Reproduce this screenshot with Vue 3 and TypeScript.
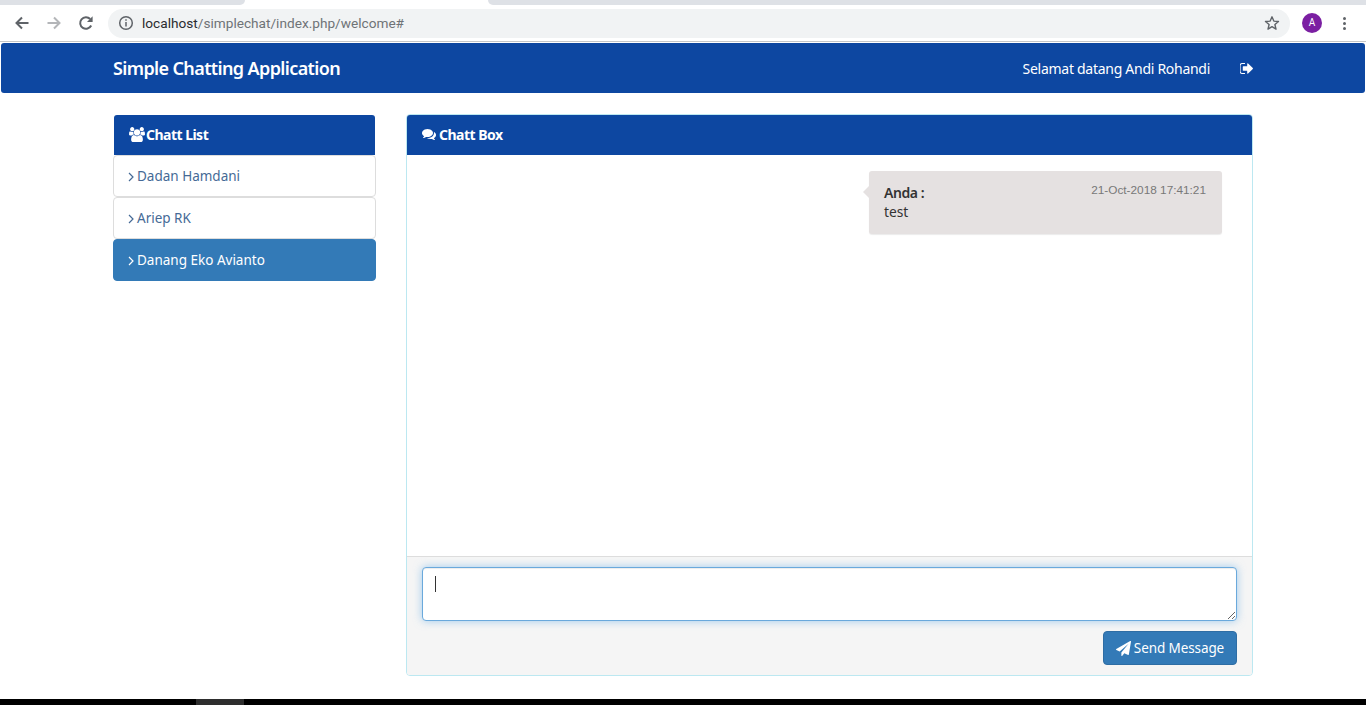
<script setup lang="ts">
const contacts = [
  { name: 'Dadan Hamdani', active: false },
  { name: 'Ariep RK', active: false },
  { name: 'Danang Eko Avianto', active: true },
]
const plane = 'M1764 11q33 24 27 64l-256 1536q-5 29-32 45-14 8-31 8-11 0-24-5l-453-185-242 295q-18 23-49 23-13 0-22-4-19-7-30.5-23.5t-11.5-36.5v-349l864-1059-1069 925-395-162q-37-14-40-55-2-40 32-59l1664-960q15-9 32-9 20 0 36 11z'
const comments = 'M1408 768q0 139-94 257t-256.500 186.500-353.500 68.500q-86 0-176-16-124 88-278 128-36 9-86 16h-3q-11 0-20.500-8t-11.500-21q-1-3-1-6.500t.5-6.500 2-6l2.500-5 3.500-5.500 4-5 4.500-5 4-4.500q5-6 23-25t26-29.500 22.500-29 25-38.500 20.500-44q-124-72-195-177t-71-224q0-139 94-257t256.500-186.500 353.500-68.500 353.500 68.500 256.500 186.500 94 257zm384 256q0 120-71 224.500t-195 176.500q10 24 20.500 44t25 38.500 22.500 29 26 29.500 23 25q1 1 4 4.500t4.500 5 4 5 3.500 5.500l2.500 5 2 6 .5 6.500-1 6.500q-3 14-13 22t-22 7q-50-7-86-16-154-40-278-128-90 16-176 16-271 0-472-132 58 4 88 4 161 0 309-45t264-129q125-92 192-212t67-254q0-77-23-152 129 71 204 178t75 230z'
const users = 'M593 896q-162 5-265 128h-134q-82 0-138-40.500t-56-118.500q0-353 124-353 6 0 43.500 21t97.500 42.500 119 21.500q67 0 133-23-5 37-5 66 0 139 81 256zm1071 637q0 120-73 189.500t-194 69.500h-874q-121 0-194-69.500t-73-189.500q0-53 3.500-103.500t14-109 26.500-108.500 43-97.500 62-81 85.500-53.500 111.500-20q10 0 43 21.500t73 48 107 48 135 21.500 135-21.500 107-48 73-48 43-21.500q61 0 111.500 20t85.500 53.500 62 81 43 97.500 26.500 108.500 14 109 3.500 103.500zm-1024-1277q0 106-75 181t-181 75-181-75-75-181 75-181 181-75 181 75 75 181zm704 384q0 159-112.500 271.500t-271.500 112.500-271.500-112.500-112.500-271.500 112.500-271.500 271.500-112.500 271.500 112.500 112.500 271.500zm576 225q0 78-56 118.500t-138 40.500h-134q-103-123-265-128 81-117 81-256 0-29-5-66 66 23 133 23 59 0 119-21.500t97.500-42.500 43.500-21q124 0 124 353zm-128-609q0 106-75 181t-181 75-181-75-75-181 75-181 181-75 181 75 75 181z'
const signOut = 'M704 1440q0 4 1 20t.5 26.500-3 23.500-10 19.500-20.500 6.500h-320q-119 0-203.500-84.500t-84.500-203.500v-704q0-119 84.500-203.500t203.500-84.500h320q13 0 22.500 9.500t9.500 22.500q0 4 1 20t.5 26.500-3 23.500-10 19.500-20.500 6.500h-320q-66 0-113 47t-47 113v704q0 66 47 113t113 47h312l11.500 1 11.500 3 8 5.500 7 9 2 13.500zm928-544q0 26-19 45l-544 544q-19 19-45 19t-45-19-19-45v-288h-448q-26 0-45-19t-19-45v-384q0-26 19-45t45-19h448v-288q0-26 19-45t45-19 45 19l544 544q19 19 19 45z'
</script>

<template>
  <div class="page">
    <div class="tabstrip">
      <div class="tab-gray tab-left"></div>
      <div class="tab-active"></div>
      <div class="tab-gray tab-right"></div>
    </div>
    <div class="toolbar">
      <div class="navbtns">
        <svg class="tbicon" viewBox="0 0 16 16"><path d="M14.5 8H2.5M8 2.5L2.5 8 8 13.5" fill="none" stroke="#5f6368" stroke-width="2"/></svg>
        <svg class="tbicon" viewBox="0 0 16 16"><path d="M1.500 8H13.500M8 2.500L13.500 8 8 13.500" fill="none" stroke="#b4b6b9" stroke-width="2"/></svg>
        <svg class="tbicon" viewBox="0 0 16 16"><path d="M13.200 10.500A5.800 5.800 0 1 1 12.200 4" fill="none" stroke="#5f6368" stroke-width="2"/><path d="M14.600 1.300V7H9z" fill="#5f6368"/></svg>
      </div>
      <div class="omnibox">
        <svg class="info" viewBox="0 0 16 16"><circle cx="8" cy="8" r="6.300" fill="none" stroke="#5f6368" stroke-width="1.500"/><path d="M8 7v4.500M8 4.300v1.500" stroke="#5f6368" stroke-width="1.500"/></svg>
        <span class="url"><span class="host">localhost</span>/simplechat/index.php/welcome#</span>
        <svg class="star" viewBox="0 0 16 16"><path d="M8 1.800l1.800 4.300 4.700.4-3.600 3 1.100 4.600L8 11.700l-4 2.400 1.100-4.600-3.600-3 4.700-.4z" fill="none" stroke="#5f6368" stroke-width="1.400" stroke-linejoin="round"/></svg>
      </div>
      <div class="avatar">A</div>
      <div class="menu"><i></i><i></i><i></i></div>
    </div>
    <div class="sep"></div>

    <nav class="navbar">
      <div class="container navrow">
        <span class="brand">Simple Chatting Application</span>
        <div class="navright">
          <span class="welcome">Selamat datang Andi Rohandi</span>
          <svg class="signout" viewBox="128 256 1504 1280"><path :d="signOut" fill="#fff"/></svg>
        </div>
      </div>
    </nav>

    <main class="container content">
      <aside class="side">
        <div class="heading"><svg class="ic-users" viewBox="0 0 1920 1792"><path :d="users" fill="#fff"/></svg>Chatt List</div>
        <a v-for="c in contacts" :key="c.name" class="item" :class="{ active: c.active }">
          <svg class="chev" viewBox="0 0 6 10"><path d="M1 1l4 4-4 4" fill="none" stroke="currentColor" stroke-width="1.200"/></svg>{{ c.name }}
        </a>
      </aside>
      <section class="chat">
        <div class="heading"><svg class="ic-comments" viewBox="0 0 1792 1792"><path :d="comments" fill="#fff"/></svg>Chatt Box</div>
        <div class="messages">
          <div class="bubble">
            <div class="bubble-top"><strong>Anda :</strong><span class="time">21-Oct-2018 17:41:21</span></div>
            <div class="msg">test</div>
          </div>
        </div>
        <div class="footer">
          <div class="inputwrap">
            <textarea class="input"></textarea>
            <span class="caret"></span>
          </div>
          <div class="actions">
            <button class="send"><svg class="ic-plane" viewBox="0 0 1792 1792"><path :d="plane" fill="#fff"/></svg>Send Message</button>
          </div>
        </div>
      </section>
    </main>

    <div class="taskbar"><div class="taskitem"></div></div>
  </div>
</template>

<style>
html, body { margin: 0; background: #fff; overflow: hidden; }
</style>

<style scoped>
.page {
  height: 705px;
  display: flex;
  flex-direction: column;
  font-family: "Noto Sans", "Open Sans", sans-serif;
  color: #333;
  background: #fff;
  overflow: hidden;
}
.tabstrip { height: 5px; display: flex; background: #fff; flex: none; }
.tab-gray { background: #dee1e6; }
.tab-left { width: 245px; border-bottom-right-radius: 6px; }
.tab-active { width: 243px; background: #fff; }
.tab-right { flex: 1; border-bottom-left-radius: 6px; }
.toolbar {
  height: 36px;
  flex: none;
  display: flex;
  align-items: center;
  background: #fff;
  padding-left: 14px;
  box-sizing: border-box;
}
.navbtns { display: flex; gap: 16px; width: 94px; flex: none; }
.tbicon { width: 16px; height: 16px; }
.omnibox {
  width: 1182px;
  height: 29px;
  flex: none;
  display: flex;
  align-items: center;
  background: #f1f3f4;
  border-radius: 15px;
  padding: 0 10px 0 10px;
  box-sizing: border-box;
}
.info { width: 16px; height: 16px; flex: none; margin-right: 8px; }
.url { flex: 1; font: 13.65px Roboto, sans-serif; color: #6f7377; }
.host { color: #2b2c2f; }
.star { width: 16px; height: 16px; flex: none; }
.avatar {
  width: 20px;
  height: 20px;
  margin-left: 12px;
  border-radius: 50%;
  background: #7b1fa2;
  color: #fff;
  font: 10px/20px Roboto, sans-serif;
  text-align: center;
  flex: none;
}
.menu { display: flex; flex-direction: column; gap: 2px; margin-left: 21px; flex: none; }
.menu i { width: 3px; height: 3px; border-radius: 50%; background: #5f6368; }
.sep { height: 1px; background: #c4c6c8; flex: none; }
.navbar {
  flex: none;
  height: 50px;
  margin: 1px 1px 0;
  background: #0d47a1;
  border-radius: 3px;
  color: #fff;
}
.container { width: 1140px; margin: 0 auto; box-sizing: border-box; }
.navrow { height: 50px; display: flex; align-items: center; justify-content: space-between; }
.brand { font-size: 18px; font-weight: 600; letter-spacing: -0.62px; }
.navright { display: flex; align-items: center; }
.welcome { font-size: 14px; letter-spacing: -0.28px; }
.signout { width: 13px; height: 11px; margin-left: 30px; }
.content {
  flex: 1;
  min-height: 0;
  display: grid;
  grid-template-columns: 263px 847px;
  column-gap: 30px;
  padding-top: 21px;
  align-content: start;
}
.heading {
  height: 40px;
  display: flex;
  align-items: center;
  padding: 0 15px 2px;
  background: #0d47a1;
  color: #fff;
  font-size: 14px;
  font-weight: 700;
  letter-spacing: -0.52px;
  border-radius: 3px 3px 0 0;
  box-sizing: border-box;
}
.ic-users { width: 16px; height: 15px; margin-right: 1px; }
.ic-comments { width: 14px; height: 14px; margin-right: 3px; }
.item {
  display: flex;
  align-items: center;
  height: 42px;
  padding: 0 15px;
  box-sizing: border-box;
  border: 1px solid #ddd;
  border-radius: 4px;
  background: #fff;
  color: #456a96;
  font-size: 13.5px;
}
.side { padding-top: 1px; }
.side .heading { margin: 0 1px; padding-left: 15px; }
.chev { width: 6px; height: 10px; margin: 1px 3px 0 -1px; }
.item.active { background: #337ab7; border-color: #337ab7; color: #fff; }
.chat { border: 1px solid #bce8f1; border-radius: 4px; height: 562px; display: flex; flex-direction: column; box-sizing: border-box; }
.messages { flex: 1; min-height: 0; display: flex; justify-content: flex-end; align-items: flex-start; padding: 16px 30px 0 0; }
.bubble {
  position: relative;
  width: 353px;
  height: 63px;
  box-sizing: border-box;
  padding: 10px 16px 0 15px;
  background: #e5e1e1;
  border-radius: 3px;
  box-shadow: 0 1px 1px rgba(0,0,0,.08);
  font-size: 14px;
  color: #333;
}
.bubble::before {
  content: "";
  position: absolute;
  left: -6px;
  top: 15px;
  border: 6px solid transparent;
  border-left: 0;
  border-right-color: #e5e1e1;
}
.bubble-top { display: flex; justify-content: space-between; height: 21px; }
.bubble-top strong { font-weight: 600; line-height: 23px; letter-spacing: -0.45px; }
.time { font: 11.8px "Liberation Sans", sans-serif; color: #787878; line-height: 18px; }
.msg { line-height: 20px; font-size: 13.8px; }
.footer {
  flex: none;
  height: 119px;
  box-sizing: border-box;
  background: #f5f5f5;
  border-top: 1px solid #ddd;
  padding: 10px 15px 0;
  border-radius: 0 0 3px 3px;
}
.inputwrap { position: relative; height: 54px; }
.input {
  display: block;
  width: 100%;
  height: 100%;
  box-sizing: border-box;
  margin: 0;
  border: 1px solid #6aa9dc;
  border-radius: 4px;
  background: #fff;
  outline: none;
  box-shadow: inset 0 1px 1px rgba(0,0,0,.075), 0 0 8px rgba(102,175,233,.6);
}
.caret { position: absolute; left: 13px; top: 9px; width: 1px; height: 16px; background: #333; }
.actions { display: flex; justify-content: flex-end; margin-top: 10px; }
.send {
  width: 134px;
  height: 34px;
  display: flex;
  align-items: center;
  justify-content: center;
  padding: 0;
  background: #337ab7;
  border: 1px solid #2e6da4;
  border-radius: 4px;
  color: #fff;
  font: 13.5px "Noto Sans", sans-serif;
  letter-spacing: -0.1px;
}
.ic-plane { width: 15px; height: 15px; margin-right: 3px; }
.taskbar { height: 6px; flex: none; background: #000; padding-left: 196px; }
.taskitem { width: 48px; height: 6px; background: #2e2e2e; }
</style>
